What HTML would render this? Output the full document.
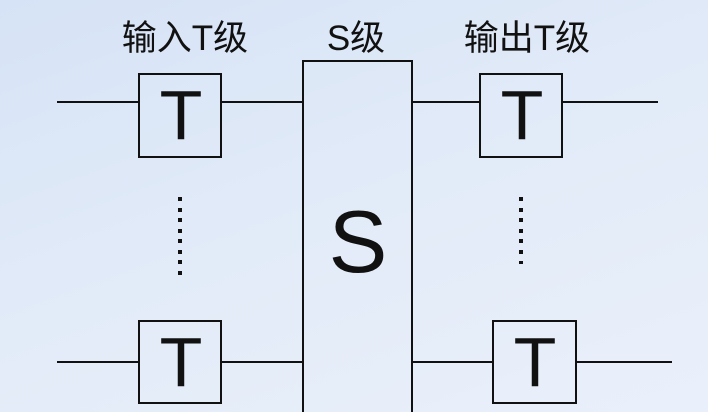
<!DOCTYPE html>
<html><head><meta charset="utf-8"><style>
html,body{margin:0;padding:0;width:708px;height:412px;overflow:hidden;background:linear-gradient(160deg,#d6e3f6 0%,#e2ebf8 50%,#eaf0fb 100%);}
svg{display:block}
text{font-family:"Liberation Sans","Noto Sans CJK SC",sans-serif;fill:#111}
</style></head><body>
<svg width="708" height="412" viewBox="0 0 708 412">
<g stroke="#111" stroke-width="2" fill="none">
<line x1="57" y1="102" x2="139" y2="102"/>
<line x1="221" y1="102" x2="303" y2="102"/>
<line x1="412" y1="102" x2="480" y2="102"/>
<line x1="562" y1="102" x2="658" y2="102"/>
<line x1="57" y1="362" x2="139" y2="362"/>
<line x1="221" y1="362" x2="303" y2="362"/>
<line x1="412" y1="362" x2="493" y2="362"/>
<line x1="576" y1="362" x2="672" y2="362"/>
<rect x="139" y="74" width="82" height="83"/>
<rect x="480" y="74" width="82" height="83"/>
<rect x="139" y="321" width="82" height="82"/>
<rect x="493" y="321" width="83" height="82"/>
<rect x="303" y="61" width="109" height="360"/>
</g>
<g fill="#111">
<rect x="178" y="197" width="4" height="4"/><rect x="178" y="208" width="4" height="4"/><rect x="178" y="218" width="4" height="4"/><rect x="178" y="229" width="4" height="4"/><rect x="178" y="239" width="4" height="4"/><rect x="178" y="250" width="4" height="4"/><rect x="178" y="260" width="4" height="4"/><rect x="178" y="271" width="4" height="4"/>
<rect x="519" y="197" width="4" height="4"/><rect x="519" y="208" width="4" height="4"/><rect x="519" y="218" width="4" height="4"/><rect x="519" y="229" width="4" height="4"/><rect x="519" y="239" width="4" height="4"/><rect x="519" y="250" width="4" height="4"/><rect x="519" y="261" width="4" height="3"/>
</g>
<text x="185" y="50" font-size="35" text-anchor="middle">输入T级</text>
<text x="356" y="50" font-size="35" text-anchor="middle">S级</text>
<text x="527" y="50" font-size="35" text-anchor="middle">输出T级</text>
<text x="181" y="139" font-size="70" text-anchor="middle">T</text>
<text x="522" y="139" font-size="70" text-anchor="middle">T</text>
<text x="181" y="386" font-size="70" text-anchor="middle">T</text>
<text x="535" y="386" font-size="70" text-anchor="middle">T</text>
<text x="358" y="272" font-size="88" text-anchor="middle">S</text>
</svg>
</body></html>
